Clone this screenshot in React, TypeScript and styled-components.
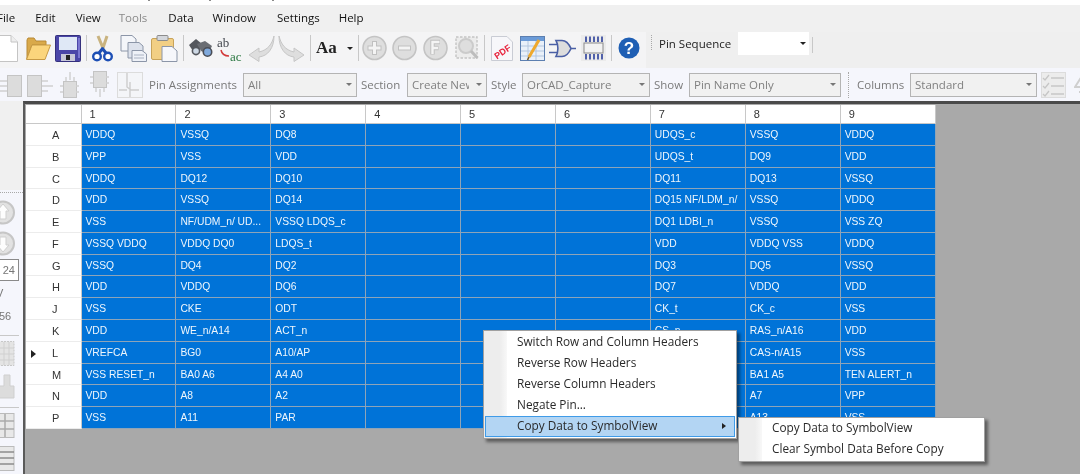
import React from 'react'
import styled, { createGlobalStyle } from 'styled-components'

const uiFont = `"Open Sans", "Noto Sans", "Liberation Sans", sans-serif`
const gridFont = `"Liberation Sans", Arial, sans-serif`

const GlobalStyle = createGlobalStyle`
  html, body {
    margin: 0;
    padding: 0;
    background: #a9a9a9;
    overflow: hidden;
  }
`

const menuItems = [
  { label: 'File', left: -3 },
  { label: 'Edit', left: 20 },
  { label: 'View', left: 20 },
  { label: 'Tools', left: 18, disabled: true },
  { label: 'Data', left: 21 },
  { label: 'Window', left: 19 },
  { label: 'Settings', left: 21 },
  { label: 'Help', left: 19 },
]

const rows = [
  ['A', 'VDDQ', 'VSSQ', 'DQ8', '', '', '', 'UDQS_c', 'VSSQ', 'VDDQ'],
  ['B', 'VPP', 'VSS', 'VDD', '', '', '', 'UDQS_t', 'DQ9', 'VDD'],
  ['C', 'VDDQ', 'DQ12', 'DQ10', '', '', '', 'DQ11', 'DQ13', 'VSSQ'],
  ['D', 'VDD', 'VSSQ', 'DQ14', '', '', '', 'DQ15 NF/LDM_n/', 'VSSQ', 'VDDQ'],
  ['E', 'VSS', 'NF/UDM_n/ UD...', 'VSSQ LDQS_c', '', '', '', 'DQ1 LDBI_n', 'VSSQ', 'VSS ZQ'],
  ['F', 'VSSQ VDDQ', 'VDDQ DQ0', 'LDQS_t', '', '', '', 'VDD', 'VDDQ VSS', 'VDDQ'],
  ['G', 'VSSQ', 'DQ4', 'DQ2', '', '', '', 'DQ3', 'DQ5', 'VSSQ'],
  ['H', 'VDD', 'VDDQ', 'DQ6', '', '', '', 'DQ7', 'VDDQ', 'VDD'],
  ['J', 'VSS', 'CKE', 'ODT', '', '', '', 'CK_t', 'CK_c', 'VSS'],
  ['K', 'VDD', 'WE_n/A14', 'ACT_n', '', '', '', 'CS_n', 'RAS_n/A16', 'VDD'],
  ['L', 'VREFCA', 'BG0', 'A10/AP', '', '', '', '', 'CAS-n/A15', 'VSS'],
  ['M', 'VSS RESET_n', 'BA0 A6', 'A4 A0', '', '', '', '', 'BA1 A5', 'TEN ALERT_n'],
  ['N', 'VDD', 'A8', 'A2', '', '', '', '', 'A7', 'VPP'],
  ['P', 'VSS', 'A11', 'PAR', '', '', '', '', 'A13', 'VSS'],
]

const App = () => (
  <>
    <GlobalStyle />
    <Page>
      <TitleStrip>
        <TitleMark $ml={148} />
        <TitleMark $ml={59} />
        <TitleMark $ml={61} />
      </TitleStrip>
      <MenuBar>
        {menuItems.map((m) => (
          <MenuLabel key={m.label} $left={m.left} $disabled={m.disabled}>
            {m.label}
          </MenuLabel>
        ))}
      </MenuBar>

      <MainToolbar>
        <Tool $w={18}><NewIcon /></Tool>
        <Tool $w={26} $ml={7}><OpenIcon /></Tool>
        <Tool $w={26} $ml={4}><SaveIcon /></Tool>
        <Separator $ml={5} />
        <Tool $w={21} $ml={5}><ScissorsIcon /></Tool>
        <Tool $w={27} $ml={7}><CopyIcon /></Tool>
        <Tool $w={27} $ml={4}><PasteIcon /></Tool>
        <Separator $ml={5} />
        <Tool $w={25} $ml={4}><BinocularsIcon /></Tool>
        <Tool $w={28} $ml={4}><ReplaceIcon /></Tool>
        <Tool $w={27} $ml={3}><CurveArrow /></Tool>
        <Tool $w={28} $ml={2}><CurveArrow flip /></Tool>
        <Separator $ml={5} />
        <FontGlyph>Aa</FontGlyph>
        <SmallArrow $ml={9} />
        <Separator $ml={5} />
        <Tool $w={25} $ml={3}><RoundIcon kind="plus" /></Tool>
        <Tool $w={25} $ml={5}><RoundIcon kind="minus" /></Tool>
        <Tool $w={25} $ml={6}><RoundIcon kind="f" /></Tool>
        <Tool $w={24} $ml={7}><ZoomBoxIcon /></Tool>
        <Separator $ml={5} />
        <Tool $w={22} $ml={6}><PdfIcon /></Tool>
        <Tool $w={25} $ml={7}><TableEditIcon /></Tool>
        <Tool $w={27} $ml={4}><GateIcon /></Tool>
        <Tool $w={25} $ml={5}><ChipIcon /></Tool>
        <Separator $ml={5} />
        <Tool $w={22} $ml={6}><HelpIcon /></Tool>
        <SequenceGrip />
        <SequenceLabel>Pin Sequence</SequenceLabel>
        <SequenceCombo>
          <SmallArrow />
        </SequenceCombo>
        <SequenceEnd />
      </MainToolbar>

      <PinToolbar>
        <Tool $w={22}><PinBoxIcon side="left" /></Tool>
        <Tool $w={26} $ml={5}><PinBoxIcon side="right" /></Tool>
        <Tool $w={19} $ml={7}><PinBoxIcon side="top" /></Tool>
        <Tool $w={19} $ml={11}><PinBoxIcon side="bottom" /></Tool>
        <Tool $w={26} $ml={8}><WaveBoxIcon /></Tool>
        <ToolLabel $w={94} $ml={6}>Pin Assignments</ToolLabel>
        <Select $w={114}><SelectText>All</SelectText><GreyArrow /></Select>
        <ToolLabel $w={46} $ml={4}>Section</ToolLabel>
        <Select $w={80}><SelectText $clip={57}>Create New</SelectText><GreyArrow /></Select>
        <ToolLabel $w={31} $ml={4}>Style</ToolLabel>
        <Select $w={128}><SelectText>OrCAD_Capture</SelectText><GreyArrow /></Select>
        <ToolLabel $w={35} $ml={4}>Show</ToolLabel>
        <Select $w={152}><SelectText>Pin Name Only</SelectText><GreyArrow /></Select>
        <DottedGrip $ml={7} />
        <ToolLabel $w={53} $ml={7}>Columns</ToolLabel>
        <Select $w={127}><SelectText>Standard</SelectText><GreyArrow /></Select>
        <Tool $w={25} $ml={4}><ChecklistIcon /></Tool>
        <Tool $w={22} $ml={8}><SigmaIcon /></Tool>
      </PinToolbar>

      <Body>
        <SideBar>
          <SideTop />
          <SidePanel>
            <SideDots />
            <RoundSide up />
            <RoundSide />
            <PageBox>24</PageBox>
            <SideText $top={4} $left={-4}>V</SideText>
            <SideText $top={7} $left={-1}>56</SideText>
            <SideRule $top={11} />
            <SideGridIcon />
            <SideTreeIcon />
            <SideRule $top={8} />
            <SideSplitIcon />
            <SideListIcon />
          </SidePanel>
        </SideBar>

        <Workspace>
          <PinGrid>
            <CornerCell />
            {[1, 2, 3, 4, 5, 6, 7, 8, 9].map((n) => (
              <ColumnHeader key={n}>{n}</ColumnHeader>
            ))}
            {rows.map(([head, ...cells]) => (
              <React.Fragment key={head}>
                <RowHeader>
                  {head === 'L' && <RowMarker />}
                  {head}
                </RowHeader>
                {cells.map((c, i) => (
                  <PinCell key={i}>{c}</PinCell>
                ))}
              </React.Fragment>
            ))}
          </PinGrid>
        </Workspace>
      </Body>

      <ContextMenu>
        <MenuRow>Switch Row and Column Headers</MenuRow>
        <MenuRow>Reverse Row Headers</MenuRow>
        <MenuRow>Reverse Column Headers</MenuRow>
        <MenuRow>Negate Pin...</MenuRow>
        <MenuRow $active>
          Copy Data to SymbolView
          <SubArrow />
        </MenuRow>
      </ContextMenu>
      <SubMenu>
        <MenuRow>Copy Data to SymbolView</MenuRow>
        <MenuRow>Clear Symbol Data Before Copy</MenuRow>
      </SubMenu>
    </Page>
  </>
)

export default App

/* toolbar icons */

const NewIcon = () => (
  <svg width="18" height="27" viewBox="0 0 18 27">
    <path d="M-2 .5H11L17.5 7V26.5H-2Z" fill="#fff" stroke="#c4c4c4" />
    <path d="M11 .5V7H17.5" fill="#eee" stroke="#c4c4c4" />
  </svg>
)

const OpenIcon = () => (
  <svg width="26" height="26" viewBox="0 0 26 26">
    <path d="M2 24V5L3 3H9L11 6H21V10H7L2 24Z" fill="#d9a94a" stroke="#b98a35" />
    <path d="M1.5 24.5L7 10H25.5L20 24.5Z" fill="#fbd57c" stroke="#c79a45" />
  </svg>
)

const SaveIcon = () => (
  <svg width="26" height="27" viewBox="0 0 26 27">
    <rect x=".5" y=".5" width="25" height="26" rx="1" fill="#4b46a8" stroke="#34307c" />
    <rect x="4" y="2" width="18" height="13" fill="#dfe8f6" />
    <rect x="6" y="19" width="14" height="7" fill="#c7c7d8" />
    <rect x="11" y="20" width="4" height="5" fill="#222" />
    <rect x="23" y="3" width="2" height="20" fill="#7a76d0" />
  </svg>
)

const ScissorsIcon = () => (
  <svg width="21" height="27" viewBox="0 0 21 27">
    <path d="M6 1L11 13L15 1" fill="none" stroke="#c9b37f" strokeWidth="3" />
    <path d="M11 13L7 18M10 13L14 18" stroke="#1d4fb5" strokeWidth="3" />
    <circle cx="5" cy="21.5" r="3.8" fill="#fff" stroke="#1d4fb5" strokeWidth="2.4" />
    <circle cx="16" cy="21.5" r="3.8" fill="#fff" stroke="#1d4fb5" strokeWidth="2.4" />
  </svg>
)

const CopyIcon = () => (
  <svg width="27" height="27" viewBox="0 0 27 27">
    <path d="M1 .5H12L16 4V16H1Z" fill="#f4f6fa" stroke="#8c96a8" />
    <path d="M8 7.5H19L23 11V23H8Z" fill="#dde2ec" stroke="#8c96a8" />
    <path d="M12 15.5H22L26.5 19V26.5H12Z" fill="#eef1f7" stroke="#8c96a8" />
    <path d="M14 20H24M14 23H24" stroke="#aab2c2" />
  </svg>
)

const PasteIcon = () => (
  <svg width="27" height="27" viewBox="0 0 27 27">
    <rect x=".5" y="3.5" width="22" height="21" rx="1.5" fill="#f2cf84" stroke="#c8a35a" />
    <rect x="6" y=".5" width="11" height="5" rx="1" fill="#d4d7dc" stroke="#8c8c8c" />
    <path d="M11 11.5H21L26 16V26.5H11Z" fill="#f6f7fb" stroke="#8c96a8" />
  </svg>
)

const BinocularsIcon = () => (
  <svg width="25" height="22" viewBox="0 0 25 22">
    <path d="M1 8L8 2L14 7L11 14L5 14Z" fill="#55585e" />
    <path d="M9 7L17 4L24 9L20 17L13 14Z" fill="#6a6d73" />
    <circle cx="8" cy="14" r="3.6" fill="#cdd8e4" stroke="#55585e" strokeWidth="1.6" />
    <circle cx="19.5" cy="15" r="4.2" fill="#7fa9dc" stroke="#4a4d55" strokeWidth="1.6" />
  </svg>
)

const ReplaceIcon = () => (
  <svg width="28" height="27" viewBox="0 0 28 27">
    <text x="0" y="12" fontFamily="'Liberation Serif', serif" fontSize="13" fill="#44484f">ab</text>
    <path d="M4 15C5 20 8 21 12 21" fill="none" stroke="#d23a3a" strokeWidth="1.5" />
    <text x="13" y="26" fontFamily="'Liberation Serif', serif" fontSize="13" fill="#2f7a45">ac</text>
  </svg>
)

const CurveArrow = ({ flip }: { flip?: boolean }) => (
  <svg width="27" height="27" viewBox="0 0 27 27" style={flip ? { transform: 'scaleX(-1)' } : undefined}>
    <path
      d="M26 1C24 9 20 15 11 17V13L1 20L11 26.5V22C20 21 26 13 26 1Z"
      fill="#dedede"
      stroke="#c6c6c6"
    />
  </svg>
)

const RoundIcon = ({ kind }: { kind: 'plus' | 'minus' | 'f' }) => (
  <svg width="25" height="26" viewBox="0 0 25 26">
    <circle cx="12.5" cy="13" r="11.5" fill="#dedede" stroke="#c4c4c4" strokeWidth="1.6" />
    {kind === 'plus' && (
      <>
        <path d="M12.5 6V20M5.5 13H19.5" stroke="#c0c0c0" strokeWidth="5" />
        <path d="M12.5 7V19M6.5 13H18.5" stroke="#f4f4f4" strokeWidth="3" />
      </>
    )}
    {kind === 'minus' && (
      <>
        <path d="M6 13H19" stroke="#c0c0c0" strokeWidth="5" />
        <path d="M7 13H18" stroke="#f4f4f4" strokeWidth="3" />
      </>
    )}
    {kind === 'f' && (
      <>
        <path d="M9.5 19.5V7H17M9.5 13H15.5" fill="none" stroke="#c0c0c0" strokeWidth="4.4" />
        <path d="M9.5 19V7H16.5M9.5 13H15" fill="none" stroke="#f4f4f4" strokeWidth="2.4" />
      </>
    )}
  </svg>
)

const ZoomBoxIcon = () => (
  <svg width="24" height="25" viewBox="0 0 24 25">
    <rect x="1" y="1" width="21" height="21" fill="#ececec" stroke="#c4c4c4" strokeWidth="1.4" strokeDasharray="2.5 1.5" />
    <circle cx="11" cy="10" r="7" fill="#dedede" stroke="#cbcbcb" strokeWidth="2" />
    <path d="M16 15L22.5 22" stroke="#bdbdbd" strokeWidth="3" />
  </svg>
)

const PdfIcon = () => (
  <svg width="22" height="25" viewBox="0 0 22 25">
    <path d="M.5 .5H16L21.5 6V24.5H.5Z" fill="#f7f7fa" stroke="#c9ccd4" />
    <text
      x="2"
      y="19"
      fontFamily="'Liberation Sans', sans-serif"
      fontSize="9"
      fontWeight="700"
      fill="#e8213b"
      transform="rotate(-35 11 15)"
    >
      PDF
    </text>
  </svg>
)

const TableEditIcon = () => (
  <svg width="25" height="25" viewBox="0 0 25 25">
    <rect x=".5" y=".5" width="24" height="24" fill="#e9f0f9" stroke="#5c7fb0" />
    <rect x="1" y="1" width="23" height="4" fill="#6b9bd8" />
    <path d="M1 10H24M1 15H24M1 20H24M8 5V24M16 5V24" stroke="#b3c6de" />
    <path d="M19 4L9 21" stroke="#efa92c" strokeWidth="3" />
    <path d="M9 21L7.5 24" stroke="#7a5a20" strokeWidth="1.6" />
  </svg>
)

const GateIcon = () => (
  <svg width="27" height="19" viewBox="0 0 27 19">
    <path d="M7 1.5H13C17 1.5 20 5 22 9.5C20 14 17 17.5 13 17.5H7C9.5 13 9.5 6 7 1.5Z" fill="#ddd" stroke="#4a5fa5" strokeWidth="1.6" />
    <path d="M0 5.5H8.5M0 13.5H8.5M22 9.5H27" stroke="#4a5fa5" strokeWidth="1.6" />
  </svg>
)

const ChipIcon = () => (
  <svg width="25" height="26" viewBox="0 0 25 26">
    <rect x="0" y="0" width="25" height="26" fill="#ebebeb" />
    <rect x="3" y="8" width="19" height="10" fill="#f2f2f2" stroke="#8a8a8a" />
    <path d="M5 1.5V7M9 1.5V7M13 1.5V7M17 1.5V7M21 1.5V7M5 19V24.5M9 19V24.5M13 19V24.5M17 19V24.5M21 19V24.5" stroke="#2b3f9a" strokeWidth="1.6" />
  </svg>
)

const HelpIcon = () => (
  <svg width="22" height="22" viewBox="0 0 22 22">
    <circle cx="11" cy="11" r="10.5" fill="#1f5fb4" />
    <text
      x="11"
      y="17"
      textAnchor="middle"
      fontFamily="'Liberation Sans', sans-serif"
      fontSize="17"
      fontWeight="700"
      fill="#fff"
    >
      ?
    </text>
  </svg>
)

const PinBoxIcon = ({ side }: { side: 'left' | 'right' | 'top' | 'bottom' }) => {
  if (side === 'left') {
    return (
      <svg width="22" height="22" viewBox="0 0 22 22" style={{ marginTop: 2 }}>
        <rect x="7.5" y=".5" width="14" height="21" fill="#dcdcdc" stroke="#c4c4c4" />
        <path d="M0 6H7M0 11H7M0 16H7" stroke="#cfcfcf" strokeWidth="1.4" />
      </svg>
    )
  }
  if (side === 'right') {
    return (
      <svg width="26" height="22" viewBox="0 0 26 22" style={{ marginTop: 2 }}>
        <rect x=".5" y=".5" width="14" height="21" fill="#dcdcdc" stroke="#c4c4c4" />
        <path d="M15 6H21M15 11H26M15 16H21" stroke="#cfcfcf" strokeWidth="1.4" />
      </svg>
    )
  }
  if (side === 'top') {
    return (
      <svg width="19" height="27" viewBox="0 0 19 27" style={{ marginTop: 0 }}>
        <rect x="3.5" y="10.5" width="13" height="16" fill="#dcdcdc" stroke="#c4c4c4" />
        <path d="M10 1V9M6 6V10M14 6V10M0 15H3M0 21H3M16 15H19M16 21H19" stroke="#cfcfcf" strokeWidth="1.4" />
      </svg>
    )
  }
  return (
    <svg width="19" height="27" viewBox="0 0 19 27" style={{ marginTop: 0 }}>
      <rect x="3.5" y=".5" width="13" height="16" fill="#dcdcdc" stroke="#c4c4c4" />
      <path d="M10 18V26M6 17V21M14 17V21M0 6H3M0 12H3M16 6H19M16 12H19" stroke="#cfcfcf" strokeWidth="1.4" />
    </svg>
  )
}

const WaveBoxIcon = () => (
  <svg width="26" height="26" viewBox="0 0 26 26">
    <rect x=".5" y=".5" width="25" height="25" fill="#f4f5f8" stroke="#dcdcdc" />
    <path d="M10 1V15L14 18L22 18M2 18H10M13 10V25" fill="none" stroke="#cdcdcd" strokeWidth="1.4" />
  </svg>
)

const ChecklistIcon = () => (
  <svg width="25" height="26" viewBox="0 0 25 26">
    <rect x=".5" y=".5" width="24" height="25" fill="#ececec" stroke="#dcdcdc" />
    <path d="M2 6L4 8L8 3M2 14L4 16L8 11M2 22L4 24L8 19M10 6H23M10 14H23M10 22H23" fill="none" stroke="#c6c6c6" strokeWidth="1.3" />
  </svg>
)

const SigmaIcon = () => (
  <svg width="22" height="26" viewBox="0 0 22 26">
    <path d="M10 1L1 15H13M11 1V24M5 20H18" fill="none" stroke="#cfcfcf" strokeWidth="2" />
  </svg>
)

/* sidebar drawings */

const RoundSide = ({ up }: { up?: boolean }) => (
  <SideSvg width="23" height="27" viewBox="0 0 23 27" $top={up ? 3 : 4}>
    <circle cx="3" cy="13.5" r="11" fill="#e2e2e2" stroke="#c6c6c6" strokeWidth="2" />
    <path
      d={up ? 'M3 5L9 12H6V20H0V12H-3Z' : 'M3 22L9 15H6V7H0V15H-3Z'}
      fill="#fdfdfd"
      stroke="#cfcfcf"
    />
  </SideSvg>
)

const SideGridIcon = () => (
  <SideSvg width="23" height="26" viewBox="0 0 23 26" $top={5}>
    <rect x="-2" y=".5" width="16" height="24" fill="#e4e4e4" stroke="#c8c8c8" strokeDasharray="2 1" />
    <path d="M-2 7H14M-2 13H14M-2 19H14M4 1V24M9 1V24" stroke="#d0d0d0" />
  </SideSvg>
)

const SideTreeIcon = () => (
  <SideSvg width="23" height="25" viewBox="0 0 23 25" $top={7}>
    <path d="M-2 12H4V1H10V12H14V24H-2Z" fill="#dcdcdc" stroke="#cfcfcf" />
  </SideSvg>
)

const SideSplitIcon = () => (
  <SideSvg width="23" height="25" viewBox="0 0 23 25" $top={5}>
    <rect x="-2" y=".5" width="16" height="24" fill="#e8e8e8" stroke="#bbb" />
    <path d="M-2 8H14M-2 16H14M5 1V24" stroke="#aaa" strokeWidth="1.5" />
  </SideSvg>
)

const SideListIcon = () => (
  <SideSvg width="23" height="25" viewBox="0 0 23 25" $top={8}>
    <rect x="-2" y=".5" width="16" height="24" fill="#e8e8e8" stroke="#bbb" />
    <path d="M-2 6H14M-2 12H14M-2 18H14" stroke="#8c8c8c" strokeWidth="1.6" />
  </SideSvg>
)

/* page */

const Page = styled.div`
  position: relative;
  width: 1080px;
  height: 474px;
  overflow: hidden;
  display: flex;
  flex-direction: column;
  background: #f0f0f0;
  filter: blur(0.55px);
`

const TitleStrip = styled.div`
  height: 5px;
  display: flex;
  background: #fff;
`

const TitleMark = styled.i<{ $ml: number }>`
  flex: none;
  width: 2px;
  height: 1px;
  margin-left: ${(p) => p.$ml}px;
  background: #8a8a8a;
`

const MenuBar = styled.div`
  height: 27px;
  padding-bottom: 2px;
  box-sizing: border-box;
  display: flex;
  align-items: center;
  background: #f0f0f0;
  font-family: ${uiFont};
  font-size: 11.5px;
`

const MenuLabel = styled.span<{ $left: number; $disabled?: boolean }>`
  margin-left: ${(p) => p.$left}px;
  color: ${(p) => (p.$disabled ? '#8a8a8a' : '#111')};
`

const MainToolbar = styled.div`
  height: 36px;
  padding-bottom: 4px;
  box-sizing: border-box;
  display: flex;
  align-items: center;
  background: linear-gradient(to right, #f4f4f5 646px, #efefef 646px);
`

const PinToolbar = styled.div`
  height: 33px;
  display: flex;
  align-items: center;
  background: #f5f6fc;
  font-family: ${uiFont};
  overflow: hidden;
`

const Tool = styled.div<{ $w: number; $ml?: number }>`
  flex: none;
  width: ${(p) => p.$w}px;
  margin-left: ${(p) => p.$ml ?? 0}px;
  display: flex;
  align-items: center;
  justify-content: center;

  svg {
    display: block;
    flex: none;
    overflow: hidden;
  }
`

const Separator = styled.div<{ $ml: number }>`
  flex: none;
  width: 1px;
  height: 26px;
  margin-left: ${(p) => p.$ml}px;
  background: #c8c8c8;
`

const DottedGrip = styled.div<{ $ml: number }>`
  flex: none;
  width: 1px;
  height: 26px;
  margin-left: ${(p) => p.$ml}px;
  border-left: 1px dotted #a8a8a8;
`

const SequenceGrip = styled.div`
  flex: none;
  width: 1px;
  height: 15px;
  margin: 0 0 11px 11px;
  border-left: 1px dotted #a8a8a8;
`

const SequenceEnd = styled.div`
  flex: none;
  width: 1px;
  height: 16px;
  margin: 0 0 6px 3px;
  background: #c8c8c8;
`

const SmallArrow = styled.i<{ $ml?: number }>`
  flex: none;
  width: 0;
  height: 0;
  margin-left: ${(p) => p.$ml ?? 0}px;
  border-left: 3px solid transparent;
  border-right: 3px solid transparent;
  border-top: 3px solid #222;
`

const FontGlyph = styled.span`
  flex: none;
  width: 22px;
  margin-left: 5px;
  font-family: 'Liberation Serif', serif;
  font-size: 17px;
  font-weight: 700;
  color: #222;
  white-space: nowrap;
`

const SequenceLabel = styled.span`
  flex: none;
  width: 79px;
  margin: 0 0 9px 6px;
  font-family: ${uiFont};
  font-size: 11.5px;
  color: #222;
  white-space: nowrap;
`

const SequenceCombo = styled.div`
  flex: none;
  width: 71px;
  height: 23px;
  margin-bottom: 9px;
  padding-right: 3px;
  box-sizing: border-box;
  display: flex;
  align-items: center;
  justify-content: flex-end;
  background: #fff;
`

const ToolLabel = styled.span<{ $w: number; $ml: number }>`
  flex: none;
  width: ${(p) => p.$w}px;
  margin-left: ${(p) => p.$ml}px;
  font-size: 11.5px;
  color: #7a7a7a;
  white-space: nowrap;
`

const Select = styled.div<{ $w: number }>`
  flex: none;
  width: ${(p) => p.$w}px;
  height: 24px;
  padding: 0 4px;
  box-sizing: border-box;
  display: flex;
  align-items: center;
  justify-content: space-between;
  background: #f1f1f1;
  border: 1px solid #b4b4b4;
`

const SelectText = styled.span<{ $clip?: number }>`
  font-size: 11.5px;
  color: #808080;
  white-space: nowrap;
  overflow: hidden;
  ${(p) => (p.$clip ? `width: ${p.$clip}px;` : '')}
`

const GreyArrow = styled.i`
  flex: none;
  width: 0;
  height: 0;
  border-left: 3px solid transparent;
  border-right: 3px solid transparent;
  border-top: 3px solid #777;
`

const Body = styled.div`
  flex: 1;
  min-height: 0;
  display: flex;
`

const SideBar = styled.div`
  flex: none;
  width: 23px;
  display: flex;
  flex-direction: column;
`

const SideTop = styled.div`
  height: 89px;
  background: #f0f0f0;
`

const SidePanel = styled.div`
  flex: 1;
  display: flex;
  flex-direction: column;
  background: #f5f6fc;
  overflow: hidden;
`

const SideDots = styled.div`
  flex: none;
  height: 3px;
  border-top: 1px dotted #a8a8a8;
  margin-top: 2px;
`

const SideSvg = styled.svg<{ $top: number }>`
  display: block;
  flex: none;
  margin-top: ${(p) => p.$top}px;
  overflow: hidden;
`

const PageBox = styled.div`
  flex: none;
  width: 25px;
  height: 22px;
  margin: 2px 0 0 -6px;
  box-sizing: border-box;
  padding-right: 3px;
  border: 1px solid #8a8a8a;
  background: #fff;
  font-family: ${gridFont};
  font-size: 11px;
  line-height: 20px;
  text-align: right;
  color: #777;
`

const SideText = styled.div<{ $top: number; $left: number }>`
  flex: none;
  height: 16px;
  margin: ${(p) => p.$top}px 0 0 ${(p) => p.$left}px;
  font-family: ${gridFont};
  font-size: 11px;
  line-height: 16px;
  color: #777;
  white-space: nowrap;
`

const SideRule = styled.div<{ $top: number }>`
  flex: none;
  height: 1px;
  margin: ${(p) => p.$top}px 4px 0 0;
  background: #c8c8c8;
`

const Workspace = styled.div`
  flex: 1;
  min-width: 0;
  box-sizing: border-box;
  padding: 1px 0 0 1px;
  background: #a9a9a9;
  border-top: 3px solid #4a4a4a;
  border-left: 2px solid #5a5a5a;
`

const PinGrid = styled.div`
  display: grid;
  grid-template-columns: 55.5px repeat(9, 94.9px);
  grid-template-rows: 19px repeat(14, 21.79px);
  width: 910px;
  font-family: ${gridFont};
  font-size: 10.3px;
`

const CornerCell = styled.div`
  background: #fff;
  border-right: 1px solid #c8c8c8;
  border-bottom: 1px solid #c8c8c8;
`

const ColumnHeader = styled.div`
  box-sizing: border-box;
  padding-left: 8px;
  background: #fff;
  border-right: 1px solid #c8c8c8;
  border-bottom: 1px solid #c8c8c8;
  color: #333;
  font-size: 11px;
  line-height: 18px;
`

const RowHeader = styled.div`
  position: relative;
  box-sizing: border-box;
  padding-left: 26px;
  background: #fff;
  border-bottom: 1px solid #ececec;
  border-right: 1px solid #c8c8c8;
  color: #333;
  font-size: 11px;
  line-height: 22px;
`

const RowMarker = styled.i`
  position: absolute;
  left: 5px;
  top: 8px;
  width: 0;
  height: 0;
  border-top: 4px solid transparent;
  border-bottom: 4px solid transparent;
  border-left: 5px solid #222;
`

const PinCell = styled.div`
  box-sizing: border-box;
  padding-left: 4px;
  background: #0073d8;
  border-right: 1px solid #8ea4b8;
  border-bottom: 1px solid #8ea4b8;
  color: #eef6fc;
  line-height: 21px;
  white-space: nowrap;
  overflow: hidden;
`

const ContextMenu = styled.div`
  position: absolute;
  left: 483px;
  top: 330px;
  width: 254px;
  box-sizing: border-box;
  padding: 1px;
  background: linear-gradient(to right, #ededed 16px, #f8f8f8 23px, #fff 23px);
  border: 1px solid #a0a0a0;
  box-shadow: 3px 3px 3px rgba(0, 0, 0, 0.45);
  font-family: ${uiFont};
  font-size: 11.8px;
  color: #2a2a2a;
`

const SubMenu = styled(ContextMenu)`
  left: 738px;
  top: 417px;
  width: 247px;
  padding-top: 0;
`

const MenuRow = styled.div<{ $active?: boolean }>`
  position: relative;
  height: 21px;
  box-sizing: border-box;
  padding-left: 31px;
  line-height: 17px;
  white-space: nowrap;
  border: 1px solid ${(p) => (p.$active ? '#3f9be8' : 'transparent')};
  background: ${(p) => (p.$active ? '#b3d5f3' : 'transparent')};
`

const SubArrow = styled.i`
  position: absolute;
  right: 8px;
  top: 6px;
  width: 0;
  height: 0;
  border-top: 3.5px solid transparent;
  border-bottom: 3.5px solid transparent;
  border-left: 4px solid #222;
`
